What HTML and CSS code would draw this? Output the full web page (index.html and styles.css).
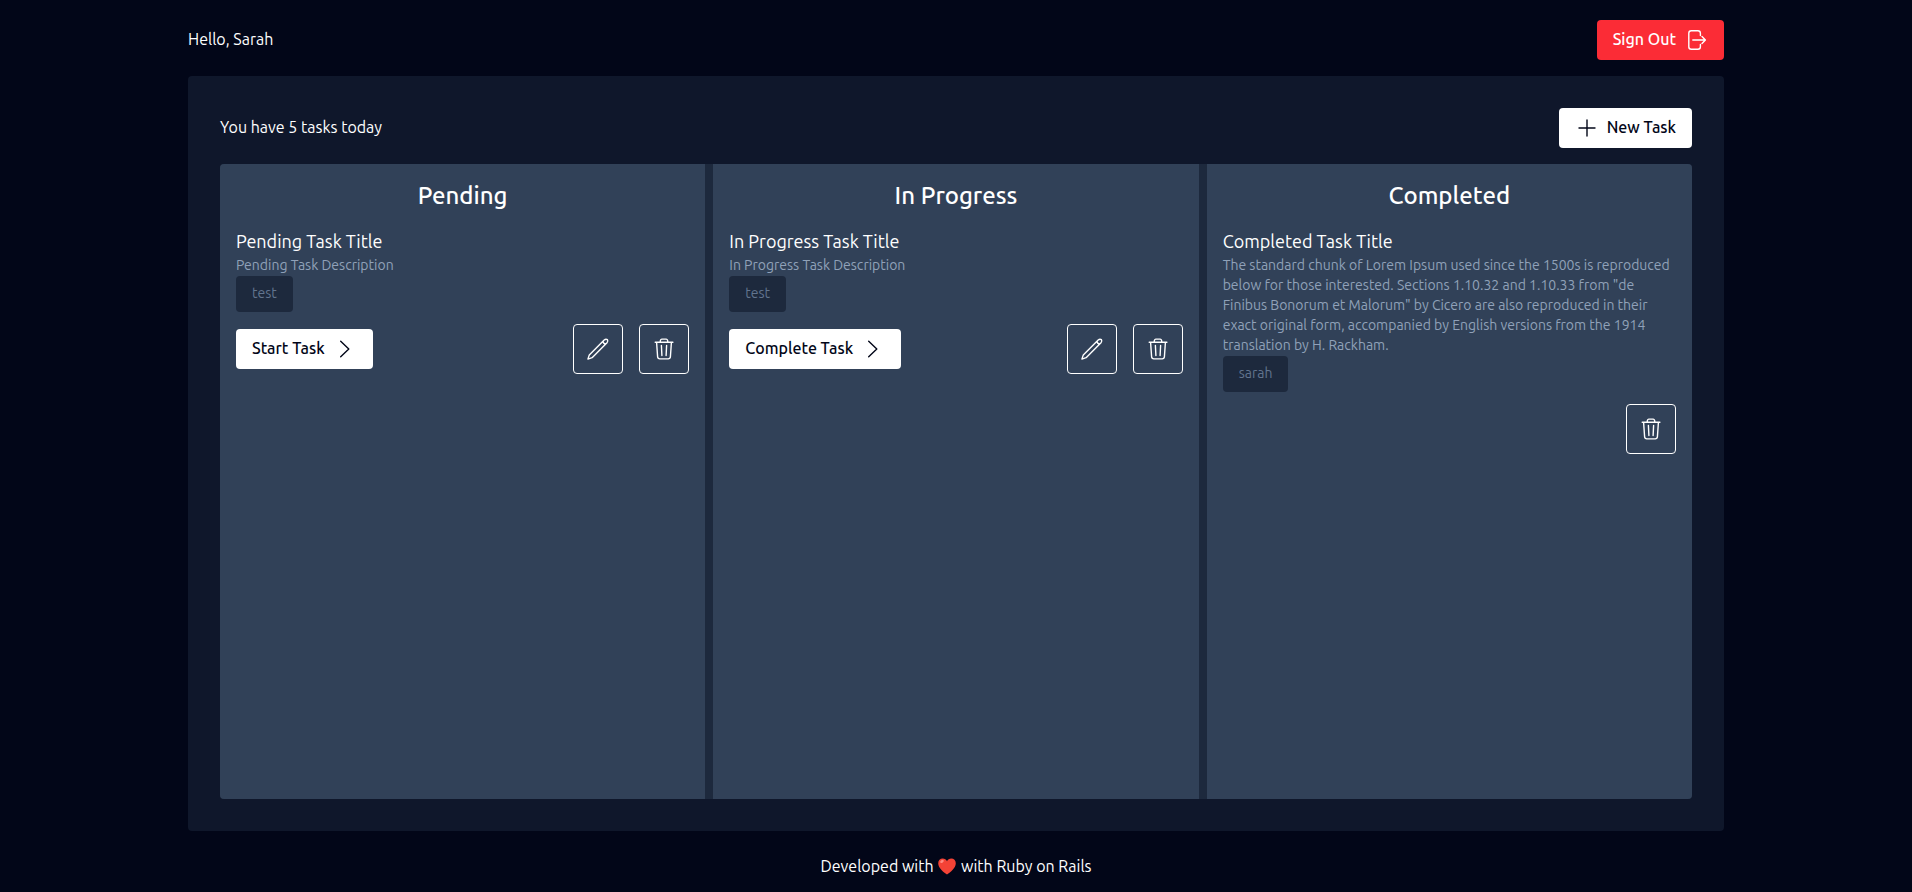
FILE: index.html
```html
<!DOCTYPE html>
<html lang="en">
<head>
<meta charset="utf-8">
<title>Tasks</title>
<link rel="stylesheet" href="styles.css">
</head>
<body>
<svg class="sprite" aria-hidden="true">
  <symbol id="sign-out" viewBox="0 0 24 24"><path d="M16.4 7.6V5.2Q16.4 2.7 13.9 2.7H7.3Q4.8 2.7 4.8 5.2V18.8Q4.8 21.3 7.3 21.3H13.9Q16.4 21.3 16.4 18.8V16.4M8.8 12H21M18 8.6L21.4 12L18 15.4"/></symbol>
  <symbol id="plus" viewBox="0 0 24 24"><path d="M12 4V20M4 12H20"/></symbol>
  <symbol id="chevron" viewBox="0 0 24 24"><path d="M7.7 4.2L15.8 12L7.7 19.8"/></symbol>
  <symbol id="pencil" viewBox="0 0 24 24"><path d="M1.9 22.1L3.3 17.9L18.2 3Q19.8 1.6 21.4 2.6Q22.4 4.2 21 5.8L6.1 20.7ZM17 4.2Q17.2 6.8 19.8 7"/></symbol>
  <symbol id="trash" viewBox="0 0 24 24"><path d="M3.2 5.3H20.9M8.1 5.1L8.5 3.1Q8.8 2.1 9.8 2.1H14.2Q15.2 2.1 15.5 3.1L15.9 5.1M4.6 5.5L5.6 19.8Q5.8 21.9 7.8 21.9H16.2Q18.2 21.9 18.4 19.8L19.4 5.5M9.4 8.5L9.9 18.5M14.6 8.5L14.1 18.5"/></symbol>
</svg>
<div class="container">
  <header class="header">
    <p class="label">Hello, Sarah</p>
    <button class="button button-danger"><span class="label">Sign Out</span><svg class="icon"><use href="#sign-out"/></svg></button>
  </header>
  <main class="panel">
    <div class="panel-header">
      <p class="label">You have 5 tasks today</p>
      <button class="button"><svg class="icon"><use href="#plus"/></svg><span class="label">New Task</span></button>
    </div>
    <div class="board">
      <section class="column">
        <h2 class="column-title">Pending</h2>
        <h3 class="task-title">Pending Task Title</h3>
        <p class="task-description">Pending Task Description</p>
        <div class="tags"><span class="tag">test</span></div>
        <div class="actions">
          <button class="button"><span class="label">Start Task</span><svg class="icon"><use href="#chevron"/></svg></button>
          <div class="icon-buttons">
            <button class="icon-button"><svg class="icon"><use href="#pencil"/></svg></button>
            <button class="icon-button"><svg class="icon"><use href="#trash"/></svg></button>
          </div>
        </div>
      </section>
      <section class="column">
        <h2 class="column-title">In Progress</h2>
        <h3 class="task-title">In Progress Task Title</h3>
        <p class="task-description">In Progress Task Description</p>
        <div class="tags"><span class="tag">test</span></div>
        <div class="actions">
          <button class="button"><span class="label">Complete Task</span><svg class="icon"><use href="#chevron"/></svg></button>
          <div class="icon-buttons">
            <button class="icon-button"><svg class="icon"><use href="#pencil"/></svg></button>
            <button class="icon-button"><svg class="icon"><use href="#trash"/></svg></button>
          </div>
        </div>
      </section>
      <section class="column">
        <h2 class="column-title">Completed</h2>
        <h3 class="task-title">Completed Task Title</h3>
        <p class="task-description">The standard chunk of Lorem Ipsum used since the 1500s is reproduced<br>below for those interested. Sections 1.10.32 and 1.10.33 from "de<br>Finibus Bonorum et Malorum" by Cicero are also reproduced in their<br>exact original form, accompanied by English versions from the 1914<br>translation by H. Rackham.</p>
        <div class="tags"><span class="tag">sarah</span></div>
        <div class="actions actions-end">
          <button class="icon-button"><svg class="icon"><use href="#trash"/></svg></button>
        </div>
      </section>
    </div>
  </main>
  <footer class="footer">Developed with <svg class="heart" viewBox="0 0 18 17"><path class="heart-fill" d="M9 16.4C5.5 14.3 0.2 10 .2 5.2C.2 2.4 2.2.6 4.7.6C6.7.6 8.2 1.7 9 3.2C9.8 1.7 11.3.6 13.3.6C15.8.6 17.8 2.4 17.8 5.2C17.8 10 12.5 14.3 9 16.4Z"/><ellipse class="heart-shine" cx="4" cy="3.4" rx="2" ry="1.3" transform="rotate(-35 4 3.4)"/></svg> with Ruby on Rails</footer>
</div>
</body>
</html>
```
FILE: styles.css
```css
* { box-sizing: border-box; margin: 0; padding: 0; }
body {
  height: 892px;
  overflow: hidden;
  background: #020618;
  color: #fff;
  font: 400 16px/24px Ubuntu, "Noto Sans", sans-serif;
}
.sprite { display: none; }
.container { display: flex; flex-direction: column; width: 1536px; height: 892px; margin: 0 auto; }
.header { display: flex; align-items: center; justify-content: space-between; padding: 20px 0 16px; }
.label { line-height: 22px; padding-bottom: 2px; }
.button {
  display: flex; align-items: center; gap: 8px;
  height: 40px; padding: 0 16px;
  border: 0; border-radius: 4px;
  background: #fff; color: #020618;
  font: inherit; font-weight: 500; white-space: nowrap;
}
.button-danger { background: #fb2c36; color: #fff; }
.icon { display: block; flex: none; width: 24px; height: 24px; fill: none; stroke: currentColor; stroke-width: 1.4; stroke-linecap: round; stroke-linejoin: round; }
.panel { display: flex; flex-direction: column; gap: 16px; height: 755px; padding: 32px; border-radius: 4px; background: #0f172b; }
.panel-header { display: flex; align-items: center; justify-content: space-between; }
.board { display: grid; grid-template-columns: repeat(3, 1fr); gap: 8px; flex: 1; overflow: hidden; border-radius: 4px; background: #1d293d; }
.column { padding: 16px; background: #314158; }
.column-title { margin-bottom: 16px; font-size: 24px; line-height: 32px; font-weight: 500; text-align: center; }
.task-title { padding-bottom: 1px; font-size: 18px; line-height: 26px; font-weight: 400; }
.task-description { padding-bottom: 1px; color: #90a1b9; font-size: 14px; line-height: 20px; font-weight: 400; white-space: nowrap; }
.tags { display: flex; margin-bottom: 12px; }
.tag { padding: 7px 16px 9px; border-radius: 4px; background: #1d293d; color: #62748e; font-size: 14px; line-height: 20px; font-weight: 400; }
.actions { display: flex; align-items: center; justify-content: space-between; }
.actions-end { justify-content: flex-end; }
.icon-buttons { display: flex; gap: 16px; }
.icon-button { display: flex; align-items: center; justify-content: center; width: 50px; height: 50px; border: 1px solid #fff; border-radius: 4px; background: transparent; color: #fff; }
.footer { padding-top: 23px; text-align: center; }
.heart { display: inline-block; width: 20px; height: 17px; vertical-align: -3px; }
.heart-fill { fill: #f44336; }
.heart-shine { fill: #ff8a80; }
```
